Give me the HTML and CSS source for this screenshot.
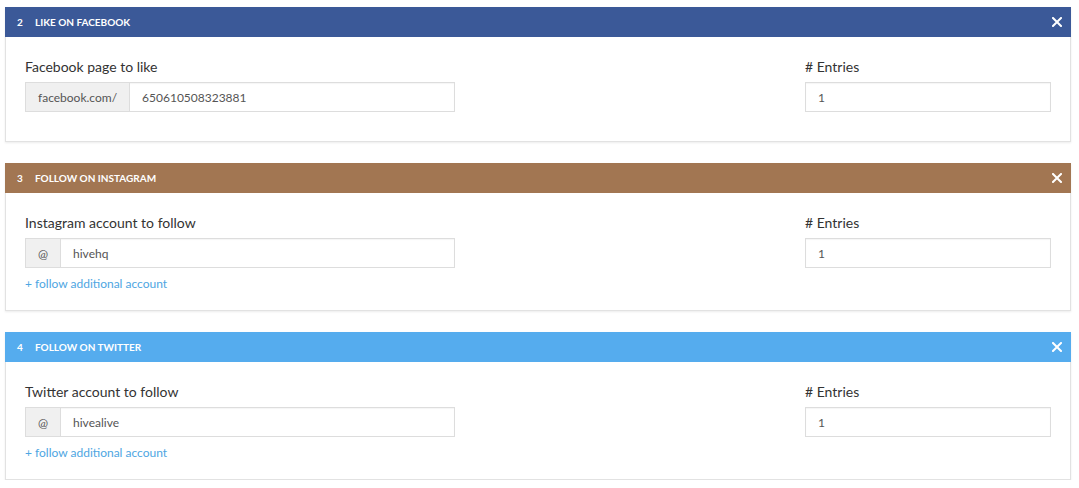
FILE: index.html
```html
<!DOCTYPE html>
<html>
<head>
<meta charset="utf-8">
<link rel="stylesheet" href="styles.css">
</head>
<body>
<div class="page">
  <section class="panel">
    <header class="panel-head facebook">
      <span class="num">2</span><span class="title">Like on Facebook</span>
      <svg class="close" width="10" height="10" viewBox="0 0 10 10"><path d="M1 1L9 9M9 1L1 9" stroke="#fff" stroke-width="2" stroke-linecap="square"/></svg>
    </header>
    <div class="panel-body">
      <div class="col-main">
        <label class="lbl">Facebook page to like</label>
        <div class="group">
          <span class="addon">facebook.com/</span>
          <span class="field">650610508323881</span>
        </div>
      </div>
      <div class="col-side">
        <label class="lbl"># Entries</label>
        <div class="group"><span class="field">1</span></div>
      </div>
    </div>
  </section>

  <section class="panel">
    <header class="panel-head instagram">
      <span class="num">3</span><span class="title">Follow on Instagram</span>
      <svg class="close" width="10" height="10" viewBox="0 0 10 10"><path d="M1 1L9 9M9 1L1 9" stroke="#fff" stroke-width="2" stroke-linecap="square"/></svg>
    </header>
    <div class="panel-body">
      <div class="col-main">
        <label class="lbl">Instagram account to follow</label>
        <div class="group">
          <span class="addon">@</span>
          <span class="field">hivehq</span>
        </div>
        <a class="more">+ follow additional account</a>
      </div>
      <div class="col-side">
        <label class="lbl"># Entries</label>
        <div class="group"><span class="field">1</span></div>
      </div>
    </div>
  </section>

  <section class="panel">
    <header class="panel-head twitter">
      <span class="num">4</span><span class="title">Follow on Twitter</span>
      <svg class="close" width="10" height="10" viewBox="0 0 10 10"><path d="M1 1L9 9M9 1L1 9" stroke="#fff" stroke-width="2" stroke-linecap="square"/></svg>
    </header>
    <div class="panel-body">
      <div class="col-main">
        <label class="lbl">Twitter account to follow</label>
        <div class="group">
          <span class="addon">@</span>
          <span class="field">hivealive</span>
        </div>
        <a class="more">+ follow additional account</a>
      </div>
      <div class="col-side">
        <label class="lbl"># Entries</label>
        <div class="group"><span class="field">1</span></div>
      </div>
    </div>
  </section>
</div>
</body>
</html>
```

FILE: styles.css
```css
html, body {
  margin: 0;
  padding: 0;
  background: #fff;
}
body {
  font-family: Lato, "Open Sans", "Liberation Sans", sans-serif;
  color: #333;
}
.page {
  padding: 7px 8px 0 5px;
  display: flex;
  flex-direction: column;
  gap: 21px;
}
.panel {
  background: #fff;
  box-shadow: 0 1px 2px rgba(0, 0, 0, 0.08);
}
.panel-head {
  height: 30px;
  display: flex;
  align-items: center;
  padding: 0 9px 0 12px;
  color: #fff;
  font-size: 10px;
  font-weight: 700;
  text-transform: uppercase;
}
.panel-head .num {
  width: 18px;
}
.panel-head .title {
  flex: 1;
}
.panel-head .close {
  display: block;
}
.facebook { background: #3b5998; }
.instagram { background: #a27652; }
.twitter { background: #55acee; }
.panel-body {
  border: 1px solid #e2e2e2;
  border-top: none;
  padding: 20px 19px 20px 19px;
  display: grid;
  grid-template-columns: 430px 1fr 246px;
}
.col-main { grid-column: 1; }
.col-side { grid-column: 3; }
.lbl {
  display: block;
  font-size: 14px;
  line-height: 20px;
  color: #333;
  margin-bottom: 5px;
}
.group {
  display: flex;
  height: 30px;
  box-sizing: border-box;
  border: 1px solid #ddd;
  margin-bottom: 9px;
  box-shadow: inset 0 1px 1px rgba(0, 0, 0, 0.04);
}
.addon {
  display: flex;
  align-items: center;
  padding: 0 12px;
  background: #f0f0f0;
  border-right: 1px solid #ddd;
  font-size: 12px;
  color: #555;
}
.field {
  display: flex;
  align-items: center;
  padding: 0 12px;
  font-size: 12px;
  color: #555;
  flex: 1;
}
.more {
  display: block;
  font-size: 12px;
  line-height: 13px;
  color: #4ea6e2;
  cursor: pointer;
}
```
